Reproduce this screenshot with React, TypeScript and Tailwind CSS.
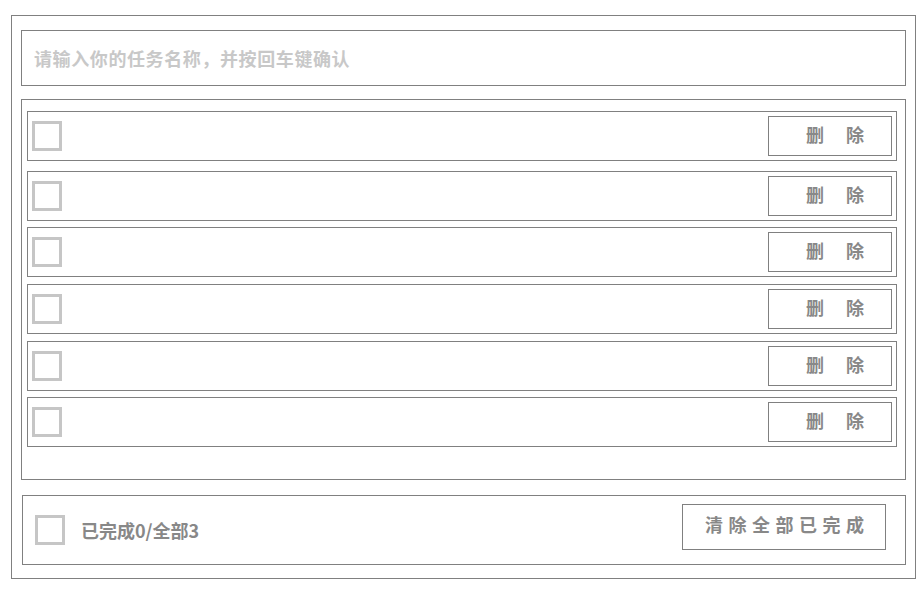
import React from "react"

const font = { fontFamily: '"Noto Sans CJK SC", "Noto Sans", sans-serif' }

// gap above each row, taken from the layout
const rowGaps = ["mt-[11px]", "mt-[10px]", "mt-[6px]", "mt-[7px]", "mt-[7px]", "mt-[6px]"]

function Checkbox() {
  return <div className="w-[30px] h-[30px] border-[3px] border-[#c6c6c6] bg-white shrink-0" />
}

function TodoRow({ gap }: { gap: string }) {
  return (
    <div className={`${gap} ml-[5px] w-[870px] h-[50px] border border-[#808080] flex items-center justify-between`}>
      <div className="ml-[4px]">
        <Checkbox />
      </div>
      <button className="mr-[4px] w-[124px] h-[40px] border border-[#808080] bg-white flex items-start pt-[8px] pl-[37px] text-[18px] leading-none font-bold text-[#888] tracking-[22px]">
        删除
      </button>
    </div>
  )
}

export default function App() {
  return (
    <div className="min-h-screen bg-white pt-[15px] pl-[11px]" style={font}>
      <div className="w-[905px] h-[564px] border border-[#808080] px-[9px] pt-[14px] pb-[13px] flex flex-col">
        <div className="h-[56px] border border-[#808080] flex items-center">
          <input
            className="w-full h-full pl-[12px] outline-none bg-transparent text-[18px] font-bold text-[#666] tracking-[0.6px] placeholder:text-[#c8c8c8]"
            placeholder="请输入你的任务名称，并按回车键确认"
          />
        </div>

        <div className="mt-[13px] h-[381px] border border-[#808080] flex flex-col">
          {rowGaps.map((g, i) => (
            <TodoRow key={i} gap={g} />
          ))}
        </div>

        <div className="mt-[15px] ml-[1px] h-[70px] border border-[#808080] flex items-center">
          <div className="ml-[12px]">
            <Checkbox />
          </div>
          <span className="ml-[16px] text-[18px] font-bold text-[#888]">已完成0/全部3</span>
          <button className="self-start mt-[8px] ml-auto mr-[19px] w-[204px] h-[46px] border border-[#808080] bg-white flex items-start pt-[10px] pl-[22px] text-[18px] leading-none font-bold text-[#888] tracking-[5.5px]">
            清除全部已完成
          </button>
        </div>
      </div>
    </div>
  )
}
